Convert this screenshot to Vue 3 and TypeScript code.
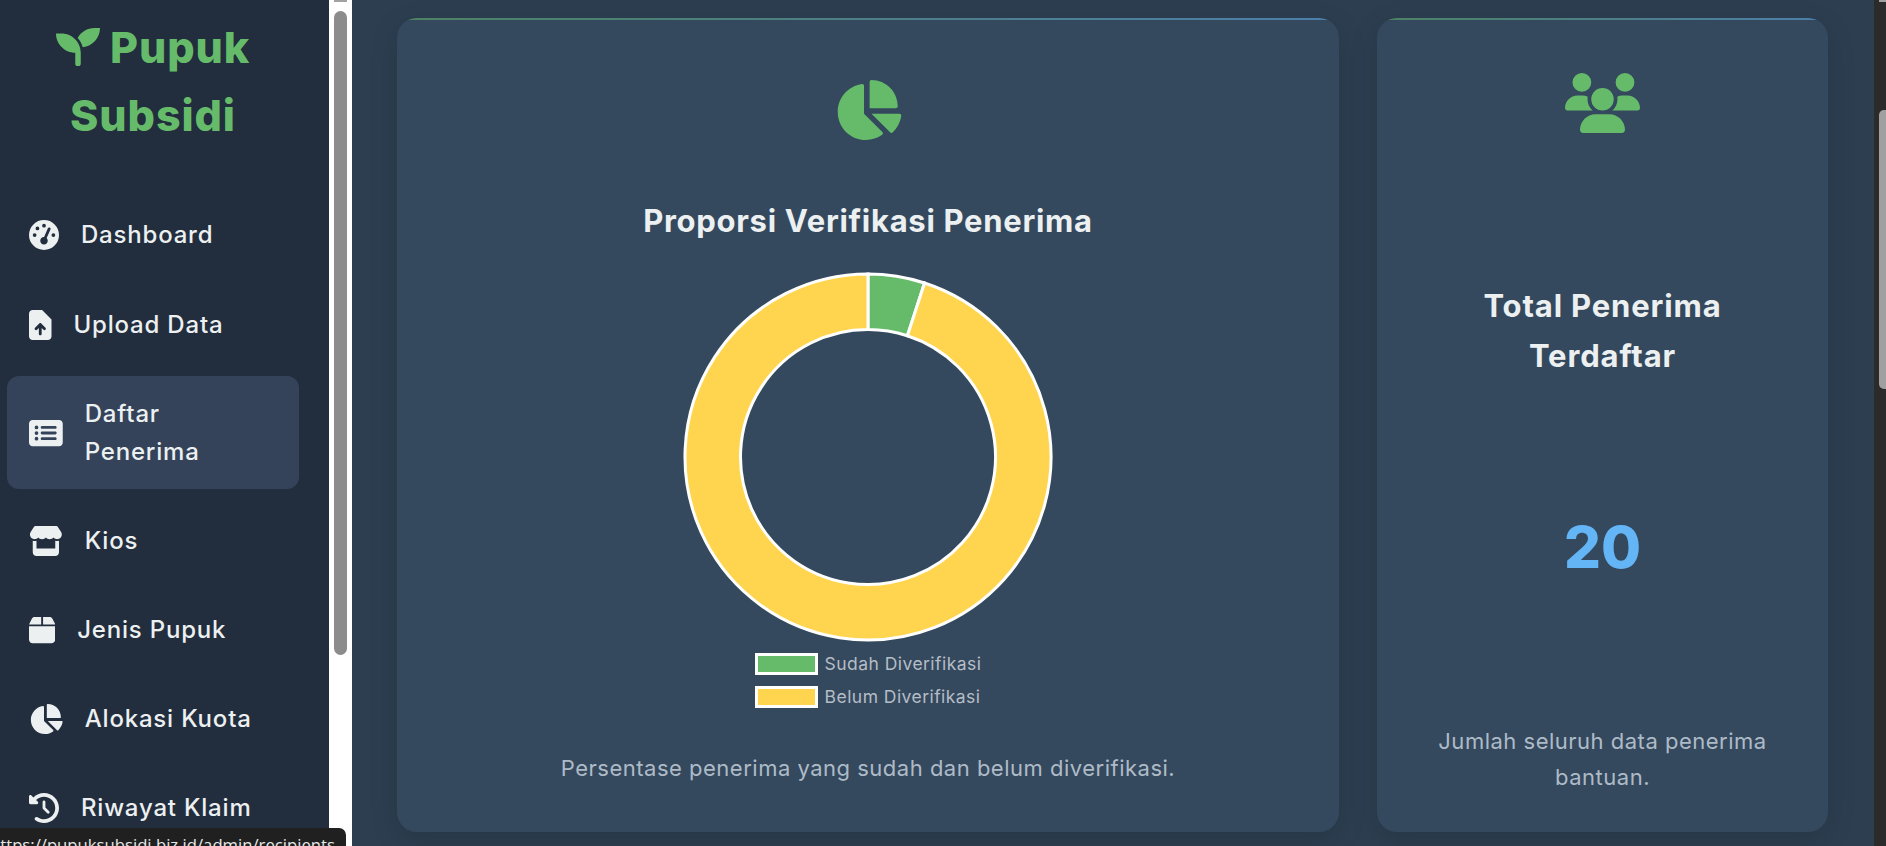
<script setup lang="ts">
interface NavItem {
  label: string
  w: number
  d: string
  active?: boolean
}

const nav: NavItem[] = [
  { label: 'Dashboard', w: 512, d: 'M0 256a256 256 0 1 1 512 0A256 256 0 1 1 0 256zM288 96a32 32 0 1 0 -64 0 32 32 0 1 0 64 0zM256 416c35.3 0 64-28.7 64-64c0-17.4-6.9-33.1-18.1-44.6L366 161.7c5.3-12.1-.2-26.3-12.3-31.6s-26.3 .2-31.6 12.3L257.9 288c-.6 0-1.3 0-1.9 0c-35.3 0-64 28.7-64 64s28.7 64 64 64zM176 144a32 32 0 1 0 -64 0 32 32 0 1 0 64 0zM96 288a32 32 0 1 0 0-64 32 32 0 1 0 0 64zm352-32a32 32 0 1 0 -64 0 32 32 0 1 0 64 0z' },
  { label: 'Upload Data', w: 384, d: 'M64 0C28.7 0 0 28.7 0 64V448c0 35.3 28.7 64 64 64H320c35.3 0 64-28.7 64-64V160H256c-17.7 0-32-14.3-32-32V0H64zM384 160L224 0V128c0 17.7 14.3 32 32 32H384zM216 408c0 13.3-10.7 24-24 24s-24-10.7-24-24V305.9l-31 31c-9.4 9.4-24.6 9.4-33.9 0s-9.4-24.6 0-33.9l72-72c9.4-9.4 24.6-9.4 33.9 0l72 72c9.4 9.4 9.4 24.6 0 33.9s-24.6 9.4-33.9 0l-31-31V408z' },
  { label: 'Daftar Penerima', w: 576, active: true, d: 'M0 96C0 60.7 28.7 32 64 32H512c35.3 0 64 28.7 64 64V416c0 35.3-28.7 64-64 64H64c-35.3 0-64-28.7-64-64V96zM128 288a32 32 0 1 0 0-64 32 32 0 1 0 0 64zm32-128a32 32 0 1 0 -64 0 32 32 0 1 0 64 0zM128 384a32 32 0 1 0 0-64 32 32 0 1 0 0 64zm96-248c-13.3 0-24 10.7-24 24s10.7 24 24 24H448c13.3 0 24-10.7 24-24s-10.7-24-24-24H224zm0 96c-13.3 0-24 10.7-24 24s10.7 24 24 24H448c13.3 0 24-10.7 24-24s-10.7-24-24-24H224zm0 96c-13.3 0-24 10.7-24 24s10.7 24 24 24H448c13.3 0 24-10.7 24-24s-10.7-24-24-24H224z' },
  { label: 'Kios', w: 576, d: 'M547.6 103.8L490.3 13.1C485.2 5 476.1 0 466.4 0H109.6C99.9 0 90.8 5 85.7 13.1L28.3 103.8c-29.6 46.8-3.4 111.9 51.9 119.4c4 .5 8.1 .8 12.1 .8c26.1 0 49.3-11.4 65.2-29c15.9 17.6 39.1 29 65.2 29c26.1 0 49.3-11.4 65.2-29c15.9 17.6 39.1 29 65.2 29c26.2 0 49.3-11.4 65.2-29c16 17.6 39.1 29 65.2 29c4.1 0 8.1-.3 12.1-.8c55.5-7.4 81.8-72.5 52.1-119.4zM499.7 254.9l-.1 0c-5.3 .7-10.7 1.1-16.2 1.1c-12.4 0-24.3-1.9-35.4-5.3V384H128V250.6c-11.2 3.5-23.2 5.4-35.6 5.4c-5.5 0-11-.4-16.3-1.1l-.1 0c-4.1-.6-8.1-1.3-12-2.3V384v64c0 35.3 28.7 64 64 64H448c35.3 0 64-28.7 64-64V384 252.6c-4 1-8 1.8-12.3 2.3z' },
  { label: 'Jenis Pupuk', w: 448, d: 'M50.7 58.5L0 160H208V32H93.7C75.5 32 58.9 42.3 50.7 58.5zM240 160H448L397.3 58.5C389.1 42.3 372.5 32 354.3 32H240V160zm208 32H0V416c0 35.3 28.7 64 64 64H384c35.3 0 64-28.7 64-64V192z' },
  { label: 'Alokasi Kuota', w: 576, d: 'M304 240V16.6c0-9 7-16.6 16-16.6C443.7 0 544 100.3 544 224c0 9-7.6 16-16.6 16H304zM32 272C32 150.7 122.1 50.3 239 34.3c9.2-1.3 17 6.1 17 15.4V288L412.5 444.5c6.7 6.7 6.2 17.7-1.5 23.1C371.8 495.6 323.8 512 272 512C139.5 512 32 404.6 32 272zm526.4 16c9.3 0 16.6 7.8 15.4 17c-7.7 55.9-34.6 105.6-73.9 142.3c-6 5.6-15.4 5.2-21.2-.7L320 288H558.4z' },
  { label: 'Riwayat Klaim', w: 512, d: 'M75 75L41 41C25.9 25.9 0 36.6 0 57.9V168c0 13.3 10.7 24 24 24H134.1c21.4 0 32.1-25.9 17-41l-30.8-30.8C155 85.5 203 64 256 64c106 0 192 86 192 192s-86 192-192 192c-40.8 0-78.6-12.7-109.7-34.4c-14.5-10.1-34.4-6.6-44.6 7.9s-6.6 34.4 7.9 44.6C151.2 495 201.7 512 256 512c141.4 0 256-114.6 256-256S397.4 0 256 0C185.3 0 121.3 28.7 75 75zm181 53c-13.3 0-24 10.7-24 24V256c0 6.4 2.5 12.5 7 17l72 72c9.4 9.4 24.6 9.4 33.9 0s9.4-24.6 0-33.9l-65-65V152c0-13.3-10.7-24-24-24z' },
]

const pieIcon = nav[5].d

const slices = [
  { label: 'Sudah Diverifikasi', value: 1, color: '#66bb6a' },
  { label: 'Belum Diverifikasi', value: 19, color: '#ffd54f' },
]

const total = slices.reduce((sum, s) => sum + s.value, 0)

const point = (r: number, deg: number) => {
  const a = ((deg - 90) * Math.PI) / 180
  return `${(186 + r * Math.cos(a)).toFixed(2)} ${(186 + r * Math.sin(a)).toFixed(2)}`
}

const arcPath = (from: number, to: number) => {
  const big = to - from > 180 ? 1 : 0
  const outer = 183
  const inner = 127.5
  return `M${point(outer, from)}A${outer} ${outer} 0 ${big} 1 ${point(outer, to)}L${point(inner, to)}A${inner} ${inner} 0 ${big} 0 ${point(inner, from)}Z`
}

let start = 0
const arcs = slices.map((s) => {
  const end = start + (s.value / total) * 360
  const arc = { d: arcPath(start, end), color: s.color }
  start = end
  return arc
})
</script>

<template>
  <div class="shell">
    <aside class="sidebar">
      <div class="side-inner">
        <h1 class="logo">
          <svg class="logo-icon" viewBox="0 32 512 448" fill="currentColor"><path d="M64 96H0c0 123.7 100.3 224 224 224v128c0 17.7 14.3 32 32 32s32-14.3 32-32V320C288 196.3 187.7 96 64 96zm384-64c-84.2 0-157.4 46.5-195.7 115.2 27.7 30.2 48.2 66.9 59 107.6C424 243.1 512 147.9 512 32h-64z" /></svg>
          Pupuk Subsidi
        </h1>
        <nav class="nav">
          <a v-for="item in nav" :key="item.label" class="nav-item" :class="{ active: item.active }">
            <svg class="nav-icon" :viewBox="`0 0 ${item.w} 512`" :style="{ width: (item.w / 512) * 30 + 'px' }" fill="currentColor"><path :d="item.d" /></svg>
            <span>{{ item.label }}</span>
          </a>
        </nav>
      </div>
      <div class="side-rail"><div class="rail-arrow"></div><div class="rail-thumb"></div></div>
    </aside>

    <main class="main">
      <section class="card chart-card">
        <svg class="pie-icon" viewBox="0 0 576 512" fill="currentColor"><path :d="pieIcon" /></svg>
        <h2 class="chart-title">Proporsi Verifikasi Penerima</h2>
        <svg class="donut" viewBox="0 0 372 372">
          <path v-for="arc in arcs" :key="arc.color" :d="arc.d" :fill="arc.color" stroke="#fff" stroke-width="3" />
        </svg>
        <ul class="legend">
          <li v-for="s in slices" :key="s.label">
            <i class="swatch" :style="{ background: s.color }"></i>{{ s.label }}
          </li>
        </ul>
        <p class="desc chart-desc">Persentase penerima yang sudah dan belum diverifikasi.</p>
      </section>

      <section class="card total-card">
        <svg class="users-icon" viewBox="0 0 640 512" fill="currentColor"><path d="M144 0a80 80 0 1 1 0 160A80 80 0 1 1 144 0zM512 0a80 80 0 1 1 0 160A80 80 0 1 1 512 0zM0 298.7C0 239.8 47.8 192 106.7 192h42.7c15.9 0 31 3.5 44.6 9.7c-1.3 7.2-1.9 14.7-1.9 22.3c0 38.2 16.8 72.5 43.3 96c-.2 0-.4 0-.7 0H21.3C9.6 320 0 310.4 0 298.7zM405.3 320c-.2 0-.4 0-.7 0c26.6-23.5 43.3-57.8 43.3-96c0-7.6-.7-15-1.9-22.3c13.6-6.3 28.7-9.7 44.6-9.7h42.7C592.2 192 640 239.8 640 298.7c0 11.8-9.6 21.3-21.3 21.3H405.3zM224 224a96 96 0 1 1 192 0 96 96 0 1 1 -192 0zM128 485.3C128 411.7 187.7 352 261.3 352H378.7C452.3 352 512 411.7 512 485.3c0 14.7-11.9 26.7-26.7 26.7H154.7c-14.7 0-26.7-11.9-26.7-26.7z" /></svg>
        <h2 class="total-title">Total Penerima Terdaftar</h2>
        <div class="total-num">20</div>
        <p class="desc total-desc">Jumlah seluruh data penerima bantuan.</p>
      </section>

      <div class="page-rail"><div class="page-arrow"></div><div class="page-thumb"></div></div>
    </main>

    <div class="status-bubble">https://pupuksubsidi.biz.id/admin/recipients</div>
  </div>
</template>

<style>
html, body {
  margin: 0;
  height: 100%;
  overflow: hidden;
}
</style>

<style scoped>
.shell {
  display: flex;
  height: 846px;
  overflow: hidden;
  position: relative;
  font-family: Inter, "Noto Sans", sans-serif;
  color: #ecf0f1;
}

.sidebar {
  width: 352px;
  flex: none;
  display: flex;
  background: #fff;
}
.side-inner {
  width: 329px;
  box-sizing: border-box;
  padding: 13px 30px 0 7px;
  background: #222d3d;
}
.side-rail {
  flex: 1;
  padding: 0 5px 0 5px;
}
.rail-arrow {
  height: 2px;
  margin-bottom: 9px;
  background: #a3a3a3;
}
.rail-thumb {
  height: 644px;
  border-radius: 7px;
  background: #8c8c8c;
}

.logo {
  margin: 0;
  font-size: 43px;
  line-height: 68px;
  font-weight: 800;
  letter-spacing: 0.9px;
  color: #66bb6a;
  text-align: center;
}
.logo-icon {
  width: 44px;
  height: 38.5px;
  margin-right: 0;
  vertical-align: -3px;
}

.nav {
  display: flex;
  flex-direction: column;
  gap: 14.4px;
  margin-top: 49px;
}
.nav-item {
  display: flex;
  align-items: center;
  gap: 22px;
  padding: 18.4px 22px;
  border-radius: 12px;
  font-size: 24px;
  line-height: 38px;
  font-weight: 500;
  letter-spacing: 0.8px;
  color: #ecf0f1;
}
.nav-item.active {
  background: #34435a;
}
.nav-icon {
  height: 30px;
  flex: none;
}

.main {
  flex: 1;
  min-width: 0;
  display: flex;
  align-items: flex-start;
  gap: 38px;
  padding: 18px 0 0 45px;
  background: #2c3e50;
  position: relative;
}

.card {
  box-sizing: border-box;
  height: 814px;
  flex: none;
  display: flex;
  flex-direction: column;
  align-items: center;
  position: relative;
  overflow: hidden;
  border-radius: 20px;
  background: #34495e;
  box-shadow: 0 8px 30px rgba(0, 0, 0, 0.12);
  text-align: center;
}
.card::before {
  content: "";
  position: absolute;
  top: 0;
  left: 0;
  right: 0;
  height: 1.5px;
  background: linear-gradient(90deg, #66bb6a, #64b5f6);
  opacity: 0.5;
}

.chart-card {
  width: 942px;
}
.total-card {
  width: 451px;
  padding: 0 38px;
}

.pie-icon {
  width: 67.5px;
  height: 60px;
  margin-top: 62px;
  color: #66bb6a;
}
.users-icon {
  width: 75px;
  height: 60px;
  margin-top: 55px;
  color: #66bb6a;
}

.chart-title,
.total-title {
  margin: 0;
  font-weight: 700;
  color: #ecf0f1;
}
.chart-title {
  margin-top: 56px;
  font-size: 31px;
  line-height: 50px;
  letter-spacing: 0.7px;
}
.total-title {
  margin-top: 148px;
  font-size: 31px;
  line-height: 50px;
  letter-spacing: 0.85px;
}

.donut {
  width: 372px;
  height: 372px;
  margin-top: 25px;
  flex: none;
}

.legend {
  list-style: none;
  margin: 10px 0 0;
  padding: 0;
  display: flex;
  flex-direction: column;
  gap: 11px;
  font-size: 17.5px;
  line-height: 22px;
  letter-spacing: 0.45px;
  color: #b5bdc6;
}
.legend li {
  display: flex;
  align-items: center;
  gap: 7px;
}
.swatch {
  width: 63px;
  height: 22px;
  box-sizing: border-box;
  border: 3px solid #fff;
}

.desc {
  margin: 0;
  font-size: 22px;
  letter-spacing: 0.5px;
  color: #aebbc7;
}
.chart-desc {
  margin-top: 42px;
  line-height: 36px;
}
.total-desc {
  margin-top: 133px;
  line-height: 36px;
}

.total-num {
  margin-top: 124px;
  font-size: 58px;
  line-height: 85px;
  font-weight: 800;
  color: #64b5f6;
}

.page-rail {
  position: absolute;
  top: 0;
  right: 0;
  bottom: 0;
  width: 12px;
  background: #2b2b2b;
}
.page-arrow {
  height: 2px;
  margin: 0 0 108px 5px;
  background: #a0a0a0;
}
.page-thumb {
  height: 279px;
  margin-left: 5px;
  border-radius: 5px 0 0 5px;
  background: #a0a0a0;
}

.status-bubble {
  position: absolute;
  left: 0;
  top: 828px;
  width: 346px;
  height: 18px;
  box-sizing: border-box;
  padding-top: 6px;
  overflow: hidden;
  white-space: nowrap;
  text-indent: -10px;
  border-top-right-radius: 7px;
  background: #1f201f;
  color: #e8e8e8;
  font-family: "Open Sans", sans-serif;
  font-size: 16.7px;
  line-height: 22px;
}
</style>
